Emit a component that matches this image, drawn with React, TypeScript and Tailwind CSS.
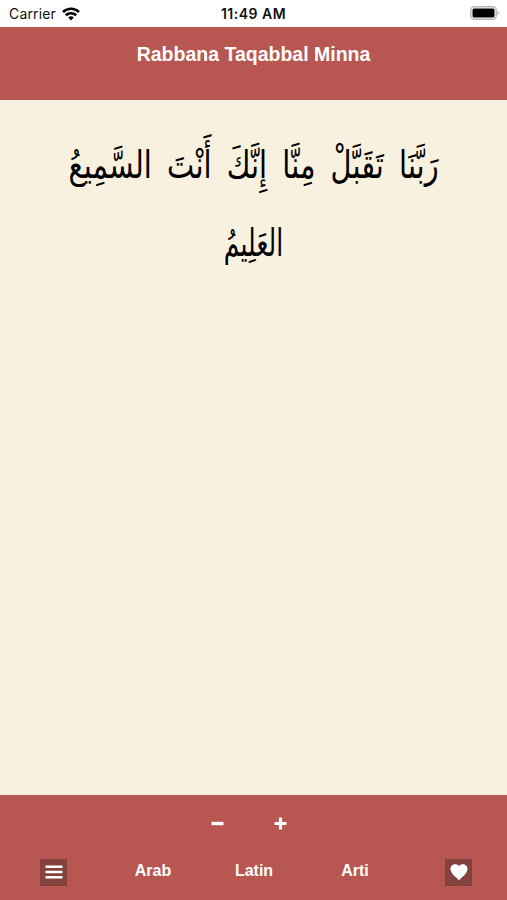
const VERSE = 'رَبَّنَا تَقَبَّلْ مِنَّا إِنَّكَ أَنْتَ السَّمِيعُ'
const VERSE_END = 'العَلِيمُ'

const TABS = ['Arab', 'Latin', 'Arti']

function StatusBar() {
  return (
    <div className="h-[27px] bg-white grid grid-cols-3 items-center text-[#111] pl-[9px] pr-[7px]">
      <div className="flex items-center gap-[6px] text-[14px]">
        <span className="tracking-[0.15px]">Carrier</span>
        <svg width="18" height="14" viewBox="0 0 18 14" fill="none" stroke="#000" strokeWidth="2.6">
          <path d="M1 5 C5.5 0.6 12.5 0.6 17 5" />
          <path d="M3.8 8.3 C6.7 5.6 11.3 5.6 14.2 8.3" />
          <path d="M6.2 10.5 Q9 8.2 11.8 10.5 L9 13.4 Z" fill="#000" stroke="none" />
        </svg>
      </div>
      <div className="text-center text-[14px] font-semibold tracking-[0.5px] -ml-0.5 whitespace-nowrap">11:49 AM</div>
      <div className="flex justify-end -mt-px">
        <svg width="30" height="14" viewBox="0 0 30 14">
          <rect x="0.8" y="0.8" width="25.4" height="12.4" rx="3.5" fill="none" stroke="#b5b5b5" strokeWidth="1.4" />
          <rect x="2.5" y="2.5" width="22" height="9" rx="1.5" />
          <path d="M27.5 4.8 Q30 7 27.5 9.2 Z" fill="#aaa" />
        </svg>
      </div>
    </div>
  )
}

function Footer() {
  return (
    <footer className="h-[105px] bg-[#b85751] text-white font-bold text-[16px] font-['Liberation_Sans',sans-serif]">
      <div className="h-[56px] flex items-center justify-center gap-[50px] pr-[9px]">
        <button aria-label="Smaller text">
          <svg width="13" height="13" viewBox="0 0 13 13" stroke="#fff" strokeWidth="3.4">
            <path d="M0.5 6.5 H12.5" />
          </svg>
        </button>
        <button aria-label="Larger text">
          <svg width="13" height="13" viewBox="0 0 13 13" stroke="#fff" strokeWidth="3.2">
            <path d="M0.5 6.5 H12.5 M6.5 0.5 V12.5" />
          </svg>
        </button>
      </div>
      <div className="h-[42px] flex items-center justify-between pl-[40px] pr-[35px]">
        <button aria-label="Menu" className="w-[27px] h-[27px] bg-[#84413e] flex items-center justify-center">
          <svg width="18" height="14" viewBox="0 0 18 14" stroke="#fff" strokeWidth="2.6">
            <path d="M0.5 1.8 H17.5 M0.5 7 H17.5 M0.5 12.2 H17.5" />
          </svg>
        </button>
        <div className="flex mr-[4px]">
          {TABS.map(tab => (
            <button key={tab} className="w-[101px] text-center mb-[3px]">{tab}</button>
          ))}
        </div>
        <button aria-label="Favourite" className="w-[27px] h-[27px] bg-[#84413e] flex items-center justify-center">
          <svg width="18" height="17" viewBox="0 0 18 17" fill="#fff">
            <path d="M9 16.5 C7.5 14 0.5 10 0.5 5 C0.5 0 6.5 -1 9 2 C11.5 -1 17.5 0 17.5 5 C17.5 10 10.5 14 9 16.5 Z" />
          </svg>
        </button>
      </div>
    </footer>
  )
}

export default function App() {
  return (
    <div className="w-full h-screen flex flex-col bg-[#f8f1df] font-['Inter',sans-serif] overflow-hidden">
      <StatusBar />
      <header className="h-[73px] bg-[#b85751] text-center text-white font-bold text-[19.5px] leading-[54px] font-['Liberation_Sans',sans-serif]">
        Rabbana Taqabbal Minna
      </header>
      <main dir="rtl" lang="ar" className="flex-1 pt-[26px] text-center text-black text-[38px] leading-[78px] font-['DejaVu_Sans',serif]">
        <p className="whitespace-nowrap [word-spacing:8px] scale-x-[0.76]">{VERSE}</p>
        <p className="scale-x-[0.66]">{VERSE_END}</p>
      </main>
      <Footer />
    </div>
  )
}
